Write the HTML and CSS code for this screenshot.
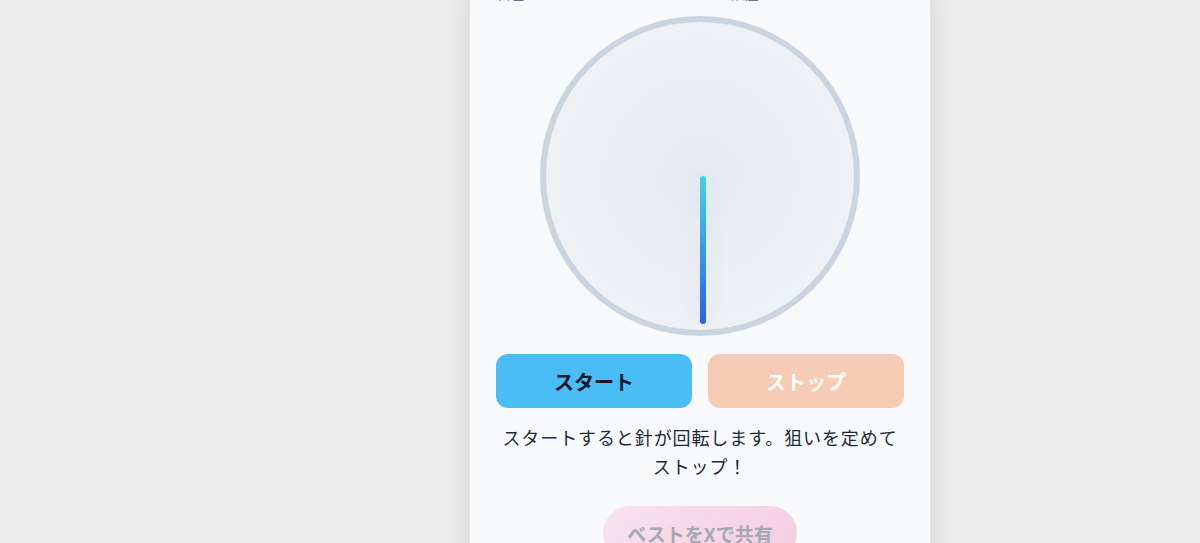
FILE: index.html
```html
<!DOCTYPE html>
<html lang="ja">
<head>
    <meta charset="UTF-8">
    <meta name="viewport" content="width=device-width, initial-scale=1.0">
    <title>ストップ・ザ・ニードル</title>
    <link rel="stylesheet" href="styles.css">
</head>
<body>
    <div class="page">
        <div class="game-card">
            <div class="stats">
                <span class="stat">自己ベスト: 0.0°</span>
                <span class="stat">誤差: —</span>
            </div>

            <div class="dial">
                <div class="needle"></div>
            </div>

            <div class="controls">
                <button class="btn btn-start">スタート</button>
                <button class="btn btn-stop" disabled>ストップ</button>
            </div>

            <p class="hint">スタートすると針が回転します。狙いを定めてストップ！</p>

            <div class="share-wrap">
                <button class="btn-share" disabled>ベストをXで共有</button>
            </div>
        </div>
    </div>
</body>
</html>
```

FILE: styles.css
```css
body {
    margin: 0;
    background-color: #eeeeee;
    font-family: "Noto Sans CJK JP", "Noto Sans", sans-serif;
    color: #1e293b;
    overflow: hidden;
}
.page {
    display: flex;
    justify-content: center;
    padding-left: 200px;
}
.game-card {
    width: 460px;
    margin-top: -17px;
    padding: 0 26px 40px;
    box-sizing: border-box;
    background: #f8f9fb;
    box-shadow: 0 0 30px rgba(0,0,0,0.12);
    min-height: 600px;
}
.stats {
    display: grid;
    grid-template-columns: 234px 1fr;
    height: 20px;
    font-size: 14px;
    line-height: 20px;
    color: #64748b;
}
.stat {
    padding-left: 1px;
}
.dial {
    position: relative;
    width: 320px;
    height: 320px;
    margin: 13px auto 0;
    box-sizing: border-box;
    border: 6px solid #cbd5e1;
    border-radius: 50%;
    background: radial-gradient(circle at center, #e6eaf1 0%, #edf0f4 60%, #f1f3f6 100%);
}
.needle {
    position: absolute;
    left: 154px;
    top: 154px;
    width: 6px;
    height: 148px;
    border-radius: 3px;
    background: linear-gradient(to bottom, #40d4e9, #2a62e8);
    box-shadow: 0 0 22px rgba(59,130,246,0.12);
}
.controls {
    display: grid;
    grid-template-columns: 1fr 1fr;
    gap: 16px;
    margin-top: 18px;
}
.btn {
    height: 54px;
    border: none;
    border-radius: 12px;
    font-family: inherit;
    font-size: 20px;
    font-weight: bold;
    cursor: pointer;
}
.btn-start {
    background-color: #4bbdf5;
    color: #0f172a;
}
.btn-stop {
    background-color: #f6cbb4;
    color: #ffffff;
    cursor: default;
}
.hint {
    margin: 15px 0 0;
    text-align: center;
    font-size: 18px;
    line-height: 29px;
    letter-spacing: 0.05em;
}
.share-wrap {
    text-align: center;
    margin-top: 25px;
}
.btn-share {
    width: 194px;
    height: 54px;
    border: none;
    border-radius: 27px;
    background: linear-gradient(120deg, #f9e2ee, #f4cde4);
    color: #a3a9b2;
    font-family: inherit;
    font-size: 19px;
    font-weight: bold;
}
```
